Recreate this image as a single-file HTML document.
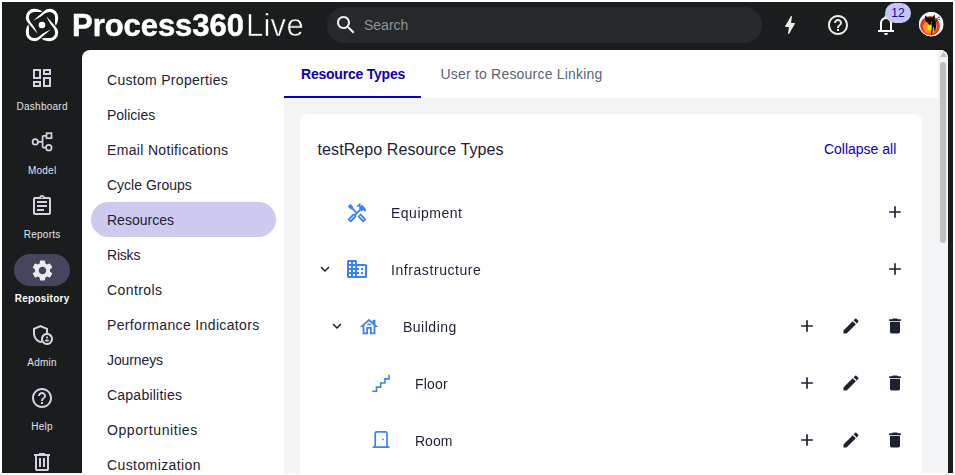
<!DOCTYPE html>
<html lang="en">
<head>
<meta charset="utf-8">
<title>Process360 Live - Resource Types</title>
<style>
*{box-sizing:border-box;margin:0;padding:0}
html,body{width:955px;height:475px;background:#fff;overflow:hidden}
body{font-family:"Liberation Sans",sans-serif;position:relative;color:#1e2230}
.abs{position:absolute}
#app{position:absolute;left:2px;top:2px;width:951px;height:471px;background:#1a1d1e;overflow:hidden}
/* all children positioned in page coordinates via #page wrapper offset */
#page{position:absolute;left:-2px;top:-2px;width:955px;height:475px}
#brand{position:absolute;left:72px;top:8.200px;height:36px;line-height:36px;font-size:31px;color:#fff;white-space:nowrap;will-change:transform}
#brand b{font-weight:bold;letter-spacing:-.05px;-webkit-text-stroke:.5px #fff}
#brand span{font-weight:normal;letter-spacing:.3px;margin-left:2px;-webkit-text-stroke:.6px #1a1d1e}
#search{position:absolute;left:327px;top:7px;width:435px;height:36px;border-radius:18px;background:#25292b}
#search .ph{position:absolute;left:37px;top:0;line-height:36px;font-size:14px;color:#8e9499}
.navlbl{position:absolute;left:2px;width:80px;padding-left:.25px;text-align:center;font-size:10px;line-height:12px;letter-spacing:.25px;color:#e4e1f0}
#panel{position:absolute;left:82px;top:50px;width:866.4px;height:430px;background:#fff;border-radius:8px 8px 0 0;overflow:hidden}
#main{position:absolute;left:202px;top:0;width:665px;height:430px;background:#f4f5f7}
#tabs{position:absolute;left:0;top:0;width:654px;height:48px;background:#fff}
.mi{position:absolute;left:25px;font-size:14px;line-height:20px;color:#1e2235;white-space:nowrap}
#pill{position:absolute;left:9px;top:152px;width:185px;height:35px;border-radius:18px;background:#cccbef}
#card{position:absolute;left:16.200px;top:64.300px;width:621.600px;height:400px;border-radius:8px;background:#fff}
.row{position:absolute;font-size:14px;line-height:20px;color:#1e2235;white-space:nowrap}
svg{position:absolute;overflow:visible}
</style>
</head>
<body>
<div id="app"><div id="page">

<!-- header -->
<svg id="logo" style="left:25px;top:8px" width="34" height="34" viewBox="-17 -17 34 34" fill="#fff">
  <path d="M.7-13.600Q-1.500-15.600-5.600-16.100L-7.500-16.150A8.400 8.400 0 0 0-16.150-7.500C-16.100-5.500-15.500-4.200-14.400-2.800L-10.800 1.400L-7.300 5.600L-4.500 8.600L-5.900 5.500L-8.300 1.300Q-10.400-1.500-11.400-2.800Q-12.900-5-13.100-7.500A5.400 5.400 0 0 1-7.500-13.100L-5.600-13.050Q-2.500-12.700.7-13.600Z"/>
  <path d="M.7-13.600Q-1.500-15.600-5.600-16.100L-7.500-16.150A8.400 8.400 0 0 0-16.150-7.500C-16.100-5.500-15.500-4.200-14.400-2.800L-10.800 1.400L-7.300 5.600L-4.500 8.600L-5.900 5.500L-8.300 1.300Q-10.400-1.500-11.400-2.800Q-12.900-5-13.100-7.500A5.400 5.400 0 0 1-7.500-13.100L-5.600-13.050Q-2.500-12.700.7-13.600Z" transform="rotate(90)"/>
  <path d="M.7-13.600Q-1.500-15.600-5.600-16.100L-7.500-16.150A8.400 8.400 0 0 0-16.150-7.500C-16.100-5.500-15.500-4.200-14.400-2.800L-10.800 1.400L-7.300 5.600L-4.500 8.600L-5.900 5.500L-8.300 1.300Q-10.400-1.500-11.400-2.800Q-12.900-5-13.100-7.500A5.400 5.400 0 0 1-7.500-13.100L-5.600-13.050Q-2.500-12.700.7-13.600Z" transform="rotate(180)"/>
  <path d="M.7-13.600Q-1.500-15.600-5.600-16.100L-7.500-16.150A8.400 8.400 0 0 0-16.150-7.500C-16.100-5.500-15.500-4.200-14.400-2.800L-10.800 1.400L-7.300 5.600L-4.500 8.600L-5.900 5.500L-8.300 1.300Q-10.400-1.500-11.400-2.800Q-12.900-5-13.100-7.500A5.400 5.400 0 0 1-7.500-13.100L-5.600-13.050Q-2.500-12.700.7-13.600Z" transform="rotate(270)"/>
  <circle cx="0" cy="0" r="3.300"/>
</svg>
<div id="brand"><b>Process360</b><span>Live</span></div>
<div id="search">
  <svg style="left:7px;top:6.300px" width="24" height="24" viewBox="0 0 24 24" fill="#f0f0f0"><path d="M15.5 14h-.79l-.28-.27C15.410 12.590 16 11.110 16 9.500 16 5.910 13.090 3 9.500 3S3 5.910 3 9.500 5.910 16 9.500 16c1.610 0 3.090-.590 4.230-1.570l.27.280v.790l5 4.990L20.490 19l-4.990-5zm-6 0C7.010 14 5 11.990 5 9.500S7.010 5 9.500 5 14 7.010 14 9.500 11.990 14 9.500 14z"/></svg>
  <div class="ph">Search</div>
</div>
<svg style="left:778px;top:13px" width="24" height="24" viewBox="0 0 24 24" fill="#ebebeb"><path d="M11 21h-1l1-7H7.500c-.580 0-.570-.320-.380-.660.190-.340.050-.080.070-.120C8.480 10.940 10.420 7.540 13 3h1l-1 7h3.500c.490 0 .560.330.470.510l-.070.150C12.960 17.550 11 21 11 21z"/></svg>
<svg style="left:826px;top:13px" width="24" height="24" viewBox="0 0 24 24" fill="#ebebeb"><path d="M11 18h2v-2h-2v2zm1-16C6.480 2 2 6.480 2 12s4.480 10 10 10 10-4.480 10-10S17.520 2 12 2zm0 18c-4.410 0-8-3.590-8-8s3.590-8 8-8 8 3.590 8 8-3.590 8-8 8zm0-14c-2.210 0-4 1.790-4 4h2c0-1.100.9-2 2-2s2 .9 2 2c0 2-3 1.750-3 5h2c0-2.250 3-2.500 3-5 0-2.210-1.790-4-4-4z"/></svg>
<svg style="left:874px;top:12.700px" width="24" height="24" viewBox="0 0 24 24" fill="#fff"><path d="M4 19v-2h2v-7q0-2.075 1.250-3.688T10.500 4.200V3.500q0-.625.438-1.062T12 2t1.063.438T13.500 3.500v.700q2 .500 3.250 2.113T18 10v7h2v2zm8 3q-.825 0-1.412-.587T10 20h4q0 .825-.587 1.413T12 22m-4-5h8v-7q0-1.650-1.175-2.825T12 6 9.175 7.175 8 10z"/></svg>
<div class="abs" style="left:885px;top:3px;width:26px;height:20px;border-radius:10px;background:#c5c5fa;color:#0d00b9;font-size:12px;line-height:20px;text-align:center">12</div>
<svg style="left:919px;top:12.300px" width="24.400" height="24.400" viewBox="0 0 24.400 24.400">
  <defs><radialGradient id="av" cx="0.5" cy="0.56" r="0.5"><stop offset="0" stop-color="#fff000"/><stop offset="0.26" stop-color="#ffdc00"/><stop offset="0.36" stop-color="#ff9c14"/><stop offset="0.66" stop-color="#f88a1c"/><stop offset="0.74" stop-color="#f03c28"/><stop offset="1" stop-color="#ee3424"/></radialGradient>
  <clipPath id="avc"><circle cx="12.200" cy="12.200" r="12.200"/></clipPath></defs>
  <g clip-path="url(#avc)">
  <rect width="24.400" height="24.400" fill="#fff"/>
  <circle cx="11" cy="14" r="10" fill="url(#av)"/>
  <path d="M6 3.300L8.700 5.700L11 5.300L13.400 5.300L15.700 2.200L16 8.500L10.800 13.300L6.400 8.800Z" fill="#0a0a0a"/>
  <path d="M14 9L16.500 8.500L17.100 14L16 20.200L15.200 17L14.200 14L13.100 22.600L12 22.600L12.800 15L12.400 12.300Z" fill="#0a0a0a"/>
  <path d="M16.500 10.500C17.500 8.500 18 6 19.200 5.400S21 5.600 21.300 5.200M19.600 7.300L21.200 7.900" stroke="#0a0a0a" stroke-width=".9" fill="none"/>
  <path d="M7.800 9.900L9.400 10.700L9.200 11.100ZM13.500 9.600L11.900 10.500L12.200 10.900Z" fill="#fff"/>
  </g>
  <circle cx="12.200" cy="12.200" r="11.800" fill="none" stroke="#fff" stroke-width=".8"/>
</svg>

<!-- left nav -->
<svg style="left:30px;top:66px" width="24" height="24" viewBox="0 0 24 24" fill="#d5d1e3"><path d="M19 5v2h-4V5h4M9 5v6H5V5h4m10 8v6h-4v-6h4M9 17v2H5v-2h4M21 3h-8v6h8V3zM11 3H3v10h8V3zm10 8h-8v10h8V11zm-10 4H3v6h8v-6z"/></svg>
<div class="navlbl" style="top:101px">Dashboard</div>

<svg style="left:30px;top:130px" width="24" height="24" viewBox="0 0 24 24" fill="none" stroke="#d5d1e3" stroke-width="1.700">
  <circle cx="5.300" cy="11.900" r="2.700"/><rect x="16.500" y="3.200" width="5" height="5"/><circle cx="18.800" cy="17.700" r="2.800"/>
  <path d="M8 11.900h4.600M12.600 5.800v11.900M12.600 5.800h3.900M12.600 17.700h3.400"/>
</svg>
<div class="navlbl" style="top:165px">Model</div>

<svg style="left:30px;top:194px" width="24" height="24" viewBox="0 0 24 24" fill="#d5d1e3"><path d="M7 15h7v2H7zm0-4h10v2H7zm0-4h10v2H7zm12-4h-4.180C14.400 1.840 13.300 1 12 1c-1.300 0-2.400.840-2.820 2H5c-.140 0-.270.010-.400.040-.390.080-.740.280-1.010.550-.180.180-.330.400-.430.640-.100.230-.160.490-.160.770v14c0 .270.060.540.160.780s.250.450.430.640c.270.270.620.470 1.010.550.130.020.260.030.400.030h14c1.100 0 2-.900 2-2V5c0-1.100-.900-2-2-2zm-7-.250c.410 0 .750.340.750.750s-.340.750-.750.750-.750-.340-.750-.750.340-.750.750-.750zM19 19H5V5h14v14z"/></svg>
<div class="navlbl" style="top:229px">Reports</div>

<div class="abs" style="left:14px;top:254px;width:56px;height:32px;border-radius:16px;background:#45465d"></div>
<svg style="left:29.500px;top:257.500px" width="25" height="25" viewBox="0 0 24 24" fill="#ebebef"><path d="M19.140 12.940c.040-.300.060-.610.060-.940 0-.320-.020-.640-.070-.940l2.030-1.580c.180-.140.230-.410.120-.610l-1.920-3.320c-.120-.220-.370-.290-.590-.220l-2.390.960c-.500-.380-1.030-.700-1.620-.940l-.360-2.540c-.040-.240-.240-.410-.480-.410h-3.840c-.240 0-.430.170-.470.410l-.360 2.540c-.590.240-1.130.570-1.620.940l-2.390-.960c-.220-.080-.470 0-.590.220L2.740 8.870c-.120.210-.080.470.120.610l2.030 1.580c-.050.300-.090.630-.090.940s.020.640.070.940l-2.030 1.580c-.180.140-.230.410-.120.610l1.920 3.320c.120.220.370.290.590.220l2.390-.960c.500.380 1.030.700 1.620.940l.360 2.540c.050.240.240.410.480.410h3.840c.240 0 .440-.170.470-.410l.360-2.540c.590-.240 1.130-.560 1.620-.940l2.390.960c.220.080.470 0 .590-.220l1.920-3.320c.120-.220.070-.470-.120-.610l-2.010-1.580zM12 15.600c-1.980 0-3.600-1.620-3.600-3.600s1.620-3.600 3.600-3.600 3.600 1.620 3.600 3.600-1.620 3.600-3.600 3.600z"/></svg>
<div class="navlbl" style="top:293px;font-weight:bold;color:#fff">Repository</div>

<svg style="left:30px;top:322px" width="24" height="24" viewBox="0 0 24 24" fill="#d5d1e3" fill-rule="evenodd"><circle cx="17" cy="15.500" r="1.120"/><path d="M17,17.500c-0.730,0-2.190,0.360-2.240,1.080c0.500,0.710,1.320,1.170,2.240,1.170 s1.740-0.460,2.240-1.170C19.190,17.860,17.730,17.500,17,17.500z"/><path d="M18,11.090V6.270L10.500,3L3,6.270v4.910c0,4.540,3.200,8.790,7.500,9.820 c0.550-0.130,1.080-0.320,1.600-0.550C13.180,21.990,14.970,23,17,23c3.310,0,6-2.690,6-6C23,14.030,20.840,11.570,18,11.090z M11,17 c0,0.560,0.080,1.110,0.230,1.620c-0.240,0.110-0.480,0.220-0.730,0.300c-3.170-1-5.500-4.240-5.500-7.740v-3.600l5.500-2.400l5.500,2.400v3.510 C13.160,11.570,11,14.030,11,17z M17,21c-2.210,0-4-1.790-4-4c0-2.210,1.790-4,4-4s4,1.790,4,4C21,19.210,19.210,21,17,21z"/></svg>
<div class="navlbl" style="top:357px">Admin</div>

<svg style="left:30px;top:386px" width="24" height="24" viewBox="0 0 24 24" fill="#d5d1e3"><path d="M11 18h2v-2h-2v2zm1-16C6.480 2 2 6.480 2 12s4.480 10 10 10 10-4.480 10-10S17.520 2 12 2zm0 18c-4.410 0-8-3.590-8-8s3.590-8 8-8 8 3.590 8 8-3.590 8-8 8zm0-14c-2.210 0-4 1.790-4 4h2c0-1.100.9-2 2-2s2 .9 2 2c0 2-3 1.750-3 5h2c0-2.250 3-2.500 3-5 0-2.210-1.790-4-4-4z"/></svg>
<div class="navlbl" style="top:421px">Help</div>

<svg style="left:30px;top:449.500px" width="24" height="24" viewBox="0 0 24 24" fill="#d5d1e3"><path d="M7 21q-.825 0-1.412-.587T5 19V6H4V4h5V3h6v1h5v2h-1v13q0 .825-.587 1.413T17 21zM17 6H7v13h10zM9 17h2V8H9zm4 0h2V8h-2zM7 6v13z"/></svg>

<!-- content panel -->
<div id="panel">
  <div id="pill"></div>
  <div class="mi" style="top:20px;letter-spacing:0.3px">Custom Properties</div>
  <div class="mi" style="top:55px">Policies</div>
  <div class="mi" style="top:90px;letter-spacing:0.33px">Email Notifications</div>
  <div class="mi" style="top:125px">Cycle Groups</div>
  <div class="mi" style="top:160px">Resources</div>
  <div class="mi" style="top:195px;letter-spacing:-0.2px">Risks</div>
  <div class="mi" style="top:230px;letter-spacing:0.4px">Controls</div>
  <div class="mi" style="top:265px;letter-spacing:0.36px">Performance Indicators</div>
  <div class="mi" style="top:300px;letter-spacing:-0.1px">Journeys</div>
  <div class="mi" style="top:335px;letter-spacing:0.23px">Capabilities</div>
  <div class="mi" style="top:370px;letter-spacing:0.58px">Opportunities</div>
  <div class="mi" style="top:405px;letter-spacing:0.4px">Customization</div>

  <div id="main">
    <div id="tabs">
      <div class="abs" style="left:17px;top:14px;font-size:14px;line-height:20px;font-weight:bold;letter-spacing:-.22px;color:#0d00b9;white-space:nowrap">Resource Types</div>
      <div class="abs" style="left:0;top:46px;width:137px;height:2px;background:#0d00b9"></div>
      <div class="abs" style="left:156.500px;top:14px;font-size:14px;line-height:20px;letter-spacing:.2px;color:#5c6472;white-space:nowrap">User to Resource Linking</div>
    </div>
    <div id="card">
      <div class="abs" style="left:17.300px;top:24.700px;font-size:16px;line-height:22px;letter-spacing:.1px;color:#1e2235;white-space:nowrap">testRepo Resource Types</div>
      <div class="abs" style="right:25.500px;top:24.700px;font-size:14px;line-height:20px;color:#0d00b9;white-space:nowrap">Collapse all</div>
    </div>
    <!-- scrollbar -->
    <div class="abs" style="left:654px;top:0;width:9px;height:430px;background:#f3f4f6"></div>
    <div class="abs" style="left:656px;top:12px;width:6px;height:181px;border-radius:3px;background:#c1c1c1"></div>
    <svg style="left:655.500px;top:2px" width="7" height="5" viewBox="0 0 7 5"><path d="M3.500 0L7 5H0z" fill="#c1c1c1"/></svg>
  </div>
</div>

<!-- tree rows -->
<div id="tree" class="abs" style="left:0;top:0;width:955px;height:475px">
<div class="row" style="left:391px;top:203px;letter-spacing:0.5px">Equipment</div>
<svg style="left:346px;top:201.900px" width="22" height="22" viewBox="0 0 24 24" fill="#3b82f6"><path d="M21.670,18.170l-5.300-5.300h-0.990l-2.540,2.540v0.990l5.300,5.300c0.390,0.390,1.020,0.390,1.410,0l2.120-2.120 C22.060,19.200,22.060,18.560,21.670,18.170z M18.840,19.590l-4.240-4.240l0.710-0.710l4.240,4.240L18.840,19.590z"/><path d="M17.340,10.190l1.410-1.410l2.120,2.120c1.170-1.170,1.170-3.070,0-4.240l-3.540-3.540l-1.410,1.410V1.710L15.220,1l-3.540,3.540l0.710,0.710 h2.830l-1.410,1.410l1.060,1.060l-2.890,2.890L7.850,6.480V5.060L4.830,2.040L2,4.870l3.030,3.030h1.410l4.130,4.130l-0.850,0.850H7.600l-5.300,5.300 c-0.390,0.390-0.390,1.020,0,1.410l2.120,2.120c0.390,0.390,1.020,0.390,1.410,0l5.300-5.300v-2.120l5.150-5.150L17.340,10.190z M9.360,15.340 l-4.240,4.240l-0.710-0.710l4.240-4.240l0,0L9.360,15.340L9.360,15.340z"/></svg>
<svg style="left:885px;top:202px" width="20" height="20" viewBox="0 0 24 24" fill="#1e2230"><path d="M19 13h-6v6h-2v-6H5v-2h6V5h2v6h6v2z"/></svg>
<div class="row" style="left:391px;top:260px;letter-spacing:0.57px">Infrastructure</div>
<svg style="left:345px;top:257.400px" width="24" height="24" viewBox="0 0 24 24" fill="#3b82f6"><path d="M12 7V4.500A1.500 1.500 0 0 0 10.500 3h-7A1.500 1.500 0 0 0 2 4.500v15A1.500 1.500 0 0 0 3.500 21h17a1.500 1.500 0 0 0 1.500-1.500v-11A1.500 1.500 0 0 0 20.500 7H12zM6 19H4v-2h2v2zm0-4H4v-2h2v2zm0-4H4V9h2v2zm0-4H4V5h2v2zm4 12H8v-2h2v2zm0-4H8v-2h2v2zm0-4H8V9h2v2zm0-4H8V5h2v2zm10 12h-8v-2h2v-2h-2v-2h2v-2h-2V9h8v10zm-2-8h-2v2h2v-2zm0 4h-2v2h2v-2z"/></svg>
<svg style="left:316px;top:259.8px" width="18" height="18" viewBox="0 0 24 24" fill="#1e2230"><path d="M16.590 8.590L12 13.170 7.410 8.590 6 10l6 6 6-6z"/></svg>
<svg style="left:885px;top:259px" width="20" height="20" viewBox="0 0 24 24" fill="#1e2230"><path d="M19 13h-6v6h-2v-6H5v-2h6V5h2v6h6v2z"/></svg>
<div class="row" style="left:403px;top:317px;letter-spacing:0.5px">Building</div>
<svg style="left:358px;top:315.700px" width="22" height="22" viewBox="0 0 24 24" fill="#3b82f6"><path d="M19,9.300V4h-3v2.600L12,3L2,12h3v8h6v-6h2v6h6v-8h3L19,9.300z M17,18h-2v-6H9v6H7v-7.810l5-4.500l5,4.500V18z"/><path d="M10,10h4c0-1.100-0.900-2-2-2S10,8.900,10,10z"/></svg>
<svg style="left:328px;top:316.8px" width="18" height="18" viewBox="0 0 24 24" fill="#1e2230"><path d="M16.590 8.590L12 13.170 7.410 8.590 6 10l6 6 6-6z"/></svg>
<svg style="left:797px;top:316px" width="20" height="20" viewBox="0 0 24 24" fill="#1e2230"><path d="M19 13h-6v6h-2v-6H5v-2h6V5h2v6h6v2z"/></svg><svg style="left:841px;top:316px" width="20" height="20" viewBox="0 0 24 24" fill="#1e2230"><path d="M3 17.250V21h3.750L17.810 9.940l-3.750-3.750L3 17.250zM20.710 7.040c.39-.39.39-1.020 0-1.410l-2.340-2.340c-.39-.39-1.020-.39-1.410 0l-1.830 1.830 3.750 3.750 1.830-1.830z"/></svg><svg style="left:885px;top:316px" width="20" height="20" viewBox="0 0 24 24" fill="#1e2230"><path d="M6 19c0 1.100.9 2 2 2h8c1.100 0 2-.9 2-2V7H6v12zM19 4h-3.500l-1-1h-5l-1 1H5v2h14V4z"/></svg>
<div class="row" style="left:415px;top:374px;letter-spacing:0.2px">Floor</div>
<svg style="left:0;top:0" width="955" height="475" viewBox="0 0 955 475" fill="none" stroke="#3b82f6" stroke-width="1.600" stroke-linecap="round" stroke-linejoin="miter"><path d="M372.800 391.200H376.500V387.100H380.700V383H384.900V378.900H389.100V375.200"/></svg>
<svg style="left:797px;top:373px" width="20" height="20" viewBox="0 0 24 24" fill="#1e2230"><path d="M19 13h-6v6h-2v-6H5v-2h6V5h2v6h6v2z"/></svg><svg style="left:841px;top:373px" width="20" height="20" viewBox="0 0 24 24" fill="#1e2230"><path d="M3 17.250V21h3.750L17.810 9.940l-3.750-3.750L3 17.250zM20.710 7.040c.39-.39.39-1.020 0-1.410l-2.340-2.340c-.39-.39-1.020-.39-1.410 0l-1.830 1.830 3.750 3.750 1.830-1.830z"/></svg><svg style="left:885px;top:373px" width="20" height="20" viewBox="0 0 24 24" fill="#1e2230"><path d="M6 19c0 1.100.9 2 2 2h8c1.100 0 2-.9 2-2V7H6v12zM19 4h-3.500l-1-1h-5l-1 1H5v2h14V4z"/></svg>
<div class="row" style="left:415px;top:431px">Room</div>
<svg style="left:0;top:0" width="955" height="475" viewBox="0 0 955 475" fill="none" stroke="#3b82f6" stroke-width="1.700" stroke-linecap="round"><path d="M373.200 447.100H388.900M375.200 447V433.400a1.500 1.500 0 0 1 1.500-1.500h8.800a1.500 1.500 0 0 1 1.500 1.500V447"/><circle cx="383" cy="439.300" r="0.900" fill="#3b82f6" stroke="none"/></svg>
<svg style="left:797px;top:430px" width="20" height="20" viewBox="0 0 24 24" fill="#1e2230"><path d="M19 13h-6v6h-2v-6H5v-2h6V5h2v6h6v2z"/></svg><svg style="left:841px;top:430px" width="20" height="20" viewBox="0 0 24 24" fill="#1e2230"><path d="M3 17.250V21h3.750L17.810 9.940l-3.750-3.750L3 17.250zM20.710 7.040c.39-.39.39-1.020 0-1.410l-2.340-2.340c-.39-.39-1.020-.39-1.410 0l-1.830 1.830 3.750 3.750 1.830-1.830z"/></svg><svg style="left:885px;top:430px" width="20" height="20" viewBox="0 0 24 24" fill="#1e2230"><path d="M6 19c0 1.100.9 2 2 2h8c1.100 0 2-.9 2-2V7H6v12zM19 4h-3.500l-1-1h-5l-1 1H5v2h14V4z"/></svg>
</div>

</div></div>
</body>
</html>
